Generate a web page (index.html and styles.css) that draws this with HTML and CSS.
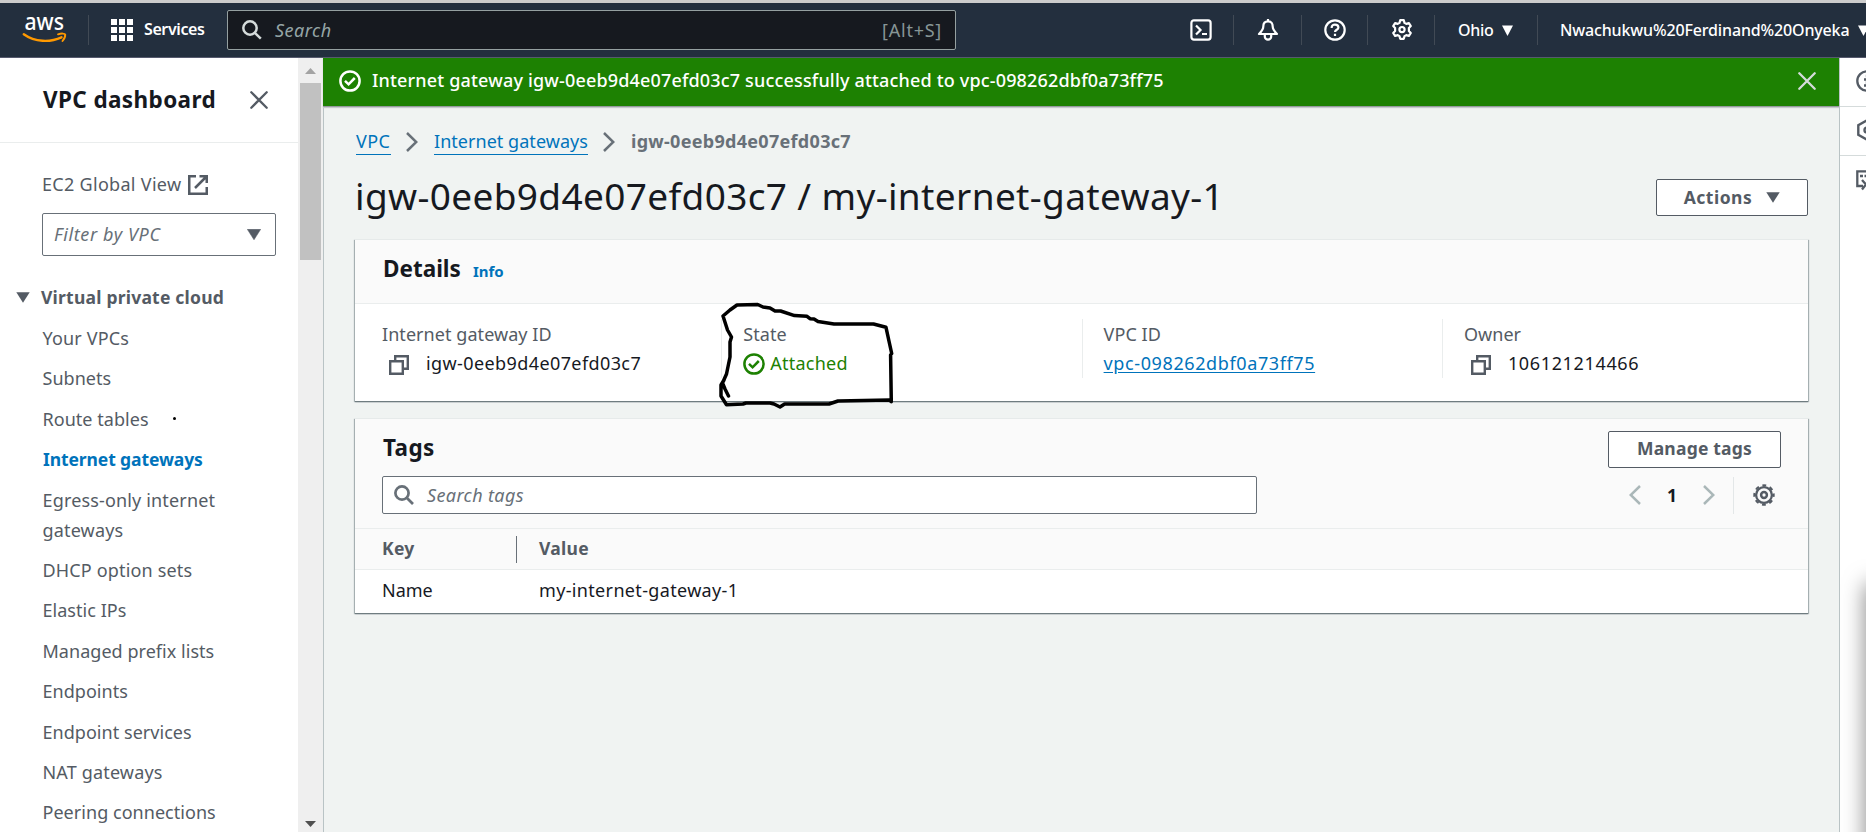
FILE: index.html
```html
<!DOCTYPE html>
<html lang="en">
<head>
<meta charset="utf-8">
<title>Internet gateway | VPC Console</title>
<link rel="stylesheet" href="styles.css">
</head>
<body>
<header class="topnav">
  <a class="logo"><svg width="44" height="28" viewBox="0 0 44 28"><text class="logo-text" x="1.500" y="14" textLength="39.500" lengthAdjust="spacingAndGlyphs">aws</text><path d="M.8 18.200C12 26.300 27 26.600 38.500 21.300" fill="none" stroke="#f90" stroke-width="2.400" stroke-linecap="round"/><path d="M35 18.300C38 17.300 42 17.300 42.200 18.500 42.400 20.500 41.200 23 39.500 25" fill="none" stroke="#f90" stroke-width="1.900" stroke-linecap="round"/></svg></a>
  <i class="rule rule-logo"></i>
  <svg class="grid-icon" width="22" height="22" viewBox="0 0 22 22" fill="#fff"><path d="M0 0h6v6H0zM8 0h6v6H8zM16 0h6v6h-6zM0 8h6v6H0zM8 8h6v6H8zM16 8h6v6h-6zM0 16h6v6H0zM8 16h6v6H8zM16 16h6v6h-6z"/></svg>
  <span class="services">Services</span>
  <div class="global-search">
    <svg width="20" height="20" viewBox="0 0 20 20" fill="none" stroke="#d5dbdb" stroke-width="2.500"><circle cx="8" cy="8" r="6.700"/><path d="M12.800 12.800l6 5.800"/></svg>
    <span class="placeholder">Search</span><span class="shortcut">[Alt+S]</span>
  </div>
  <div class="nav-tools">
    <span class="tool tool-shell"><svg width="22" height="22" viewBox="0 0 22 22" fill="none" stroke="#fff" stroke-width="2.200"><rect x="1.400" y="1.400" width="19.200" height="19.200" rx="2.500"/><path d="M6 6.500l4.500 4.500L6 15.500M12 15h5"/></svg></span>
    <span class="tool tool-bell"><svg width="22" height="22" viewBox="0 0 22 22" fill="none" stroke="#fff" stroke-width="2.200" stroke-linejoin="round"><path d="M11 0v2M11 2.300C7.500 2.300 6.300 4.800 6.300 7.500 6.300 10.500 4.500 12.500 2 15h18c-2.500-2.500-4.300-4.500-4.300-7.500C15.700 4.800 14.500 2.300 11 2.300zM7.800 15.500v2a3.200 3.200 0 0 0 6.400 0v-2"/></svg></span>
    <span class="tool tool-help"><svg width="22" height="22" viewBox="0 0 22 22" fill="none" stroke="#fff" stroke-width="2.200"><circle cx="11" cy="11" r="9.700"/><path d="M7.700 9V8.200C7.700 6.700 9 5.700 11 5.700s3.400 1 3.400 2.700c0 2.300-3.400 2.400-3.400 4.700M11 14.700v2.400"/></svg></span>
    <span class="tool tool-gear"><svg width="22" height="22" viewBox="0 0 22 22" fill="none" stroke="#fff" stroke-width="2.200" stroke-linejoin="round"><path d="M9.200 1.200h3.600l.7 2.700 1.800 1 2.600-.9 1.900 3.100-1.900 2v2.800l1.900 2-1.900 3.100-2.600-.9-1.800 1-.7 2.700H9.200l-.7-2.700-1.800-1-2.600.9-1.900-3.100 1.900-2V9.100l-1.900-2L4.100 4l2.600.9 1.800-1z"/><circle cx="11" cy="10.600" r="2.600"/></svg></span>
    <span class="tool tool-region">Ohio<svg width="11" height="11" viewBox="0 0 11 11"><path d="M0 .5h11L5.500 11z" fill="#fff"/></svg></span>
    <span class="tool tool-user">Nwachukwu%20Ferdinand%20Onyeka<svg width="11" height="11" viewBox="0 0 11 11"><path d="M0 .5h11L5.500 11z" fill="#fff"/></svg></span>
  </div>
</header>

<div class="shell">
  <nav class="sidebar">
    <div class="side-body">
      <div class="side-head"><h2>VPC dashboard</h2><svg width="18" height="18" viewBox="0 0 18 18" stroke="#545b64" stroke-width="2.300" stroke-linecap="round"><path d="M1.300 1.300l15.400 15.400M16.700 1.300L1.300 16.700"/></svg></div>
      <div class="global-view"><span>EC2 Global View</span><svg width="20" height="20" viewBox="0 0 20 20" fill="none" stroke="#545b64" stroke-width="2.500"><path d="M8 1.250H1.250v17.500h17.500V12M11.500 1.250h7.250V8M18.500 1.500L7 13"/></svg></div>
      <div class="filter"><span>Filter by VPC</span><svg width="14" height="11" viewBox="0 0 14 11"><path d="M.3.300h13.400L7 10.800z" fill="#545b64" stroke="#545b64" stroke-width=".5"/></svg></div>
      <div class="group"><svg width="14" height="11" viewBox="0 0 14 11"><path d="M.3.300h13.400L7 10.800z" fill="#545b64"/></svg><span>Virtual private cloud</span></div>
      <ul>
        <li class="loose">Your VPCs</li>
        <li>Subnets</li>
        <li class="dotted">Route tables<i class="dot"></i></li>
        <li class="active">Internet gateways</li>
        <li class="loose">Egress-only internet<br>gateways</li>
        <li class="loose">DHCP option sets</li>
        <li>Elastic IPs</li>
        <li>Managed prefix lists</li>
        <li>Endpoints</li>
        <li>Endpoint services</li>
        <li class="loose">NAT gateways</li>
        <li>Peering connections</li>
      </ul>
    </div>
    <div class="scrollbar">
      <svg width="11" height="6" viewBox="0 0 11 6"><path d="M0 6h11L5.500 0z" fill="#a3a3a3"/></svg>
      <i class="thumb"></i>
      <svg class="down" width="11" height="6" viewBox="0 0 11 6"><path d="M0 0h11L5.500 6z" fill="#505050"/></svg>
    </div>
  </nav>

  <main>
    <div class="flash">
      <svg width="22" height="22" viewBox="0 0 22 22" fill="none" stroke="#fff" stroke-width="2.500"><circle cx="11" cy="11" r="9.600"/><path d="M6 10.800l3.600 3.500 6.200-6.300"/></svg>
      <span>Internet gateway igw-0eeb9d4e07efd03c7 successfully attached to vpc-098262dbf0a73ff75</span>
      <svg class="flash-close" width="18" height="18" viewBox="0 0 18 18" stroke="#d5dbdb" stroke-width="2.300" stroke-linecap="round"><path d="M1.300 1.300l15.400 15.400M16.700 1.300L1.300 16.700"/></svg>
    </div>
    <div class="content">
      <div class="crumbs">
        <a class="c1">VPC</a>
        <svg width="12" height="20" viewBox="0 0 12 20" fill="none" stroke="#687078" stroke-width="2.500"><path d="M1 1l9.300 9L1 19"/></svg>
        <a class="c2">Internet gateways</a>
        <svg width="12" height="20" viewBox="0 0 12 20" fill="none" stroke="#687078" stroke-width="2.500"><path d="M1 1l9.300 9L1 19"/></svg>
        <b>igw-0eeb9d4e07efd03c7</b>
      </div>
      <div class="title-row">
        <h1>igw-0eeb9d4e07efd03c7 / my-internet-gateway-1</h1>
        <button class="btn actions">Actions<svg width="14" height="11" viewBox="0 0 14 11"><path d="M.3.300h13.400L7 10.800z" fill="#545b64"/></svg></button>
      </div>

      <section class="card details">
        <div class="card-head"><h2>Details</h2><a class="info">Info</a></div>
        <div class="cols">
          <div class="col"><div class="label">Internet gateway ID</div>
            <div class="value copyable"><svg width="20" height="20" viewBox="0 0 20 20" fill="none" stroke="#545b64" stroke-width="2.400"><path d="M1.200 6.200h12.600v12.600H1.200zM6.200 6V1.200h12.600v12.600H14"/></svg><span class="id">igw-0eeb9d4e07efd03c7</span></div></div>
          <div class="col"><div class="label">State</div>
            <div class="value state"><svg width="22" height="22" viewBox="0 0 22 22" fill="none" stroke="#1d8102" stroke-width="2.500"><circle cx="11" cy="11" r="9.600"/><path d="M6 10.800l3.600 3.500 6.200-6.300"/></svg><span>Attached</span></div></div>
          <div class="col"><div class="label">VPC ID</div>
            <div class="value"><a class="vpc-link">vpc-098262dbf0a73ff75</a></div></div>
          <div class="col"><div class="label">Owner</div>
            <div class="value copyable"><svg width="20" height="20" viewBox="0 0 20 20" fill="none" stroke="#545b64" stroke-width="2.400"><path d="M1.200 6.200h12.600v12.600H1.200zM6.200 6V1.200h12.600v12.600H14"/></svg><span class="owner">106121214466</span></div></div>
        </div>
        <!-- Freehand highlight around the attachment state -->
        <svg class="ink" width="180" height="110" viewBox="715 300 180 110" fill="none" stroke="#000" stroke-width="3.500" stroke-linejoin="round" stroke-linecap="round"><path d="M728.500 396L725 389 722.500 383 726.500 374 730 357 730 342 731.500 337 727.500 330 723 316 730 310 737 305 757.700 304.500 763 307 770 308 775 311 780.600 311 794.500 315.600 807 316.300 810 318.700 814 319 818 321.500 834 324 873.500 324 886 327.300 889.400 343 891.700 353.500 890.600 355 891.300 401.700 889.500 400 838 401 829 404 784.600 404 780 407 774 404 770 403 746 403 743 404 726.500 404.700 721 396 721 385 724 380"/></svg>
      </section>

      <section class="card tags">
        <div class="tags-head">
          <div class="tags-title"><h2>Tags</h2><button class="btn manage">Manage tags</button></div>
          <div class="tags-tools">
            <div class="tag-search"><svg width="20" height="20" viewBox="0 0 20 20" fill="none" stroke="#687078" stroke-width="2.700"><circle cx="8" cy="8" r="6.600"/><path d="M12.700 12.700l6.300 6.300"/></svg><span>Search tags</span></div>
            <div class="pager">
              <svg width="12" height="20" viewBox="0 0 12 20" fill="none" stroke="#aab7b8" stroke-width="2.500"><path d="M11 1L1.700 10l9.300 9"/></svg>
              <b>1</b>
              <svg width="12" height="20" viewBox="0 0 12 20" fill="none" stroke="#aab7b8" stroke-width="2.500"><path d="M1 1l9.300 9L1 19"/></svg>
              <i></i>
              <svg width="22" height="22" viewBox="0 0 22 22" fill="none" stroke="#545b64"><circle cx="11" cy="11" r="7.900" stroke-width="2.300"/><circle cx="11" cy="11" r="9.700" stroke-width="2" stroke-dasharray="3.900 3.718" stroke-dashoffset="1.950"/><circle cx="11" cy="11" r="2.900" stroke-width="2.500"/></svg>
            </div>
          </div>
        </div>
        <div class="row row-head"><b class="key">Key</b><b class="val">Value</b></div>
        <div class="row row-data"><span class="key">Name</span><span class="val">my-internet-gateway-1</span></div>
      </section>
    </div>
  </main>

  <aside class="tools">
    <div><svg width="22" height="22" viewBox="0 0 22 22" fill="none" stroke="#545b64" stroke-width="2.300"><circle cx="11" cy="11" r="9.700"/><path d="M11 4.800v2.500M8 9.500h3v6M8 15.500h6"/></svg></div>
    <div><svg width="22" height="22" viewBox="0 0 22 22" fill="none" stroke="#545b64" stroke-width="2.400"><path d="M11 1.300l8.700 4.900v9.600L11 20.700l-8.700-4.900V6.200z"/><circle cx="11" cy="11" r="2.500"/></svg></div>
    <div><svg width="22" height="22" viewBox="0 0 22 22" fill="none" stroke="#545b64" stroke-width="2.300"><path d="M7 16H1.300V1.300h19.400V16H13M4 6h3M8.500 6h3M13 6h3M6 10l4 4.500-4 5"/></svg></div>
    <i class="edge-shade"></i>
  </aside>
</div>
</body>
</html>
```
FILE: styles.css
```css
* { box-sizing: border-box; }
body {
  margin: 0;
  width: 1866px;
  height: 832px;
  overflow: hidden;
  font-family: "Noto Sans", "Open Sans", sans-serif;
  font-size: 18px;
  line-height: 30px;
  color: #16191f;
  background: #fff;
}
h1, h2, ul { margin: 0; padding: 0; }
svg { display: block; flex: none; }
span, a, b, h1, h2, li { white-space: nowrap; }

/* Top navigation */
.topnav {
  height: 58px;
  border-top: 3px solid #ccc;
  border-bottom: 1px solid #565a6e;
  background: #232f3e;
  color: #fff;
  display: flex;
  align-items: center;
  padding: 0 0 0 23px;
}
.logo svg { overflow: visible; }
.logo-text { font: 500 23px "Noto Sans", sans-serif; fill: #fff; }
.rule { width: 1px; height: 30px; background: #414a55; margin: 0 22px 0 21px; }
.services { font-size: 16px; font-weight: 600; letter-spacing: -.4px; margin-left: 11px; width: 83px; line-height: 24px; flex: none; padding-bottom: 2px; }
.global-search {
  width: 729px;
  flex: none;
  height: 40px;
  border: 1px solid #95a0a0;
  border-radius: 2px;
  background: #16191f;
  display: flex;
  align-items: center;
  padding: 0 13px 0 14px;
}
.global-search .placeholder { font-style: italic; color: #95a5a6; letter-spacing: .5px; margin-left: 13px; }
.shortcut { margin-left: auto; color: #879596; letter-spacing: .75px; }
.nav-tools { display: flex; align-items: center; margin-left: 234px; flex: none; width: 676px; overflow: hidden; }
.tool { height: 30px; display: flex; align-items: center; border-right: 1px solid #414a55; font-size: 16px; font-weight: 500; flex: none; }
.tool-shell { width: 44px; }
.tool-bell { width: 68px; padding-left: 23px; }
.tool-help { width: 66px; padding-left: 22px; }
.tool-gear { width: 67px; padding-left: 23px; }
.tool-region { width: 103px; padding-left: 23px; letter-spacing: -.3px; gap: 9px; }
.tool-user { border: 0; padding-left: 22px; letter-spacing: -.15px; gap: 9px; }

/* Page frame */
.shell { display: flex; height: 774px; }
.sidebar { width: 324px; flex: none; display: flex; border-right: 1px solid #b9c3c5; background: #fff; }
.side-body { width: 298px; color: #545b64; }
.side-head { height: 85px; border-bottom: 1px solid #eaeded; display: flex; align-items: center; padding: 0 30px 0 43px; justify-content: space-between; }
.side-head svg { margin-bottom: 1px; }
.side-head h2 { font-size: 22.5px; letter-spacing: .38px; color: #16191f; }
.global-view { display: flex; align-items: center; padding: 27px 0 0 42px; height: 57px; letter-spacing: .3px; gap: 7px; }
.global-view span { padding-bottom: 2px; }
.filter {
  margin: 13px 0 0 42px;
  width: 234px;
  height: 43px;
  border: 1px solid #687078;
  border-radius: 2px;
  display: flex;
  align-items: center;
  justify-content: space-between;
  padding: 0 14px 0 11px;
  font-style: italic;
  color: #687078;
  letter-spacing: .62px;
}
.filter span { padding-bottom: 1px; }
.group { display: flex; align-items: center; padding: 26px 0 0 16px; font-weight: 700; font-size: 17.5px; letter-spacing: .22px; gap: 11px; }
.sidebar ul { list-style: none; padding: 6px 0 0 42.500px; }
.sidebar li { padding: 5px 0 5.400px; letter-spacing: .04px; }
.sidebar .loose { letter-spacing: .16px; }
.sidebar .active { font-size: 17.5px; font-weight: 700; color: #0073bb; letter-spacing: -.1px; padding-left: .5px; }
.dotted { display: flex; align-items: center; gap: 24px; }
.dot { width: 3px; height: 3px; background: #000; border-radius: 50%; }
.scrollbar { width: 25px; background: #efefef; display: flex; flex-direction: column; align-items: center; padding: 10px 0 5px; }
.thumb { width: 21px; height: 177px; background: #c1c1c1; margin-top: 9px; }
.scrollbar .down { margin-top: auto; }

main { width: 1516px; flex: none; background: #f0f3f2; border-right: 1px solid #b9c3c5; }
.flash {
  height: 49px;
  margin: 0 0 0 -1px;
  border-bottom: 1px solid #959b9e;
  box-shadow: 0 1px 1px #c6cacc;
  background: #1d8102;
  color: #fff;
  display: flex;
  align-items: center;
  padding: 0 23px 2px 16px;
  font-weight: 500;
  letter-spacing: .17px;
}
.flash span { margin-left: 11px; padding-bottom: 2px; }
.flash-close { margin-left: auto; }
.content { padding: 20px 31px 0; }
.crumbs { display: flex; align-items: center; height: 30px; padding-left: 1px; }
.crumbs a { color: #0073bb; border-bottom: 1px solid #0073bb; line-height: 23px; height: 25px; }
.crumbs .c1 { width: 35px; letter-spacing: .45px; }
.crumbs .c2 { letter-spacing: .04px; }
.crumbs svg { margin: 0 16px 0 15px; }
.crumbs b { color: #687078; letter-spacing: .3px; padding-bottom: 2px; }
.title-row { display: flex; justify-content: space-between; align-items: center; height: 81px; }
h1 { font-size: 37px; line-height: 44px; font-weight: 400; letter-spacing: .36px; padding: 0 0 4px; }
.btn {
  font: 700 17.5px/24px "Noto Sans", sans-serif;
  height: 37px;
  color: #545b64;
  background: #fff;
  border: 1px solid #545b64;
  border-radius: 2px;
  display: flex;
  align-items: center;
  justify-content: center;
  padding: 0 0 2px;
  letter-spacing: .5px;
}
.actions { width: 152px; gap: 14px; }
.actions svg { margin-top: 2px; }
.manage { width: 173px; letter-spacing: .2px; }

/* Cards */
.card {
  position: relative;
  background: #fff;
  border-top: 1px solid #e6eaea;
  box-shadow: 0 1px 1px #6f7c80, 1px 1px 1px #b0babb, -1px 1px 1px #b0babb;
}
.card h2 { font-size: 22.5px; line-height: 30px; padding-left: 1px; }
.details { height: 162px; margin-top: 1px; }
.card-head { height: 64px; background: #fafafa; border-bottom: 1px solid #eaeded; padding: 0 27px 5px; display: flex; align-items: center; gap: 12px; }
.info { color: #0073bb; font-size: 15px; font-weight: 700; padding-top: 4px; }
.cols { display: grid; grid-template-columns: repeat(4, 360.300px); padding: 15px 0 0 6px; }
.col { height: 59px; padding-left: 21px; }
.col + .col { border-left: 1px solid #eaeded; padding-left: 21px; }
.label { color: #545b64; letter-spacing: .06px; line-height: 30px; height: 30px; }
.value { height: 29px; display: flex; align-items: center; line-height: 29px; }
.copyable { padding-left: 7px; gap: 17px; }
.copyable svg { margin-top: 2px; }
.id { letter-spacing: .4px; }
.owner { letter-spacing: .65px; }
.state { color: #1d8102; gap: 5px; letter-spacing: .24px; }
.state svg { margin-top: 1px; }
.vpc-link { color: #0073bb; text-decoration: underline; text-underline-offset: 2px; letter-spacing: .61px; }
.ink { position: absolute; left: 360px; top: 60px; }

.tags { height: 195px; margin-top: 17px; }
.tags-head { height: 110px; background: #fafafa; border-bottom: 1px solid #eaeded; padding: 12px 27px 0; }
.tags-title { display: flex; justify-content: space-between; align-items: center; height: 37px; }
.tags-title h2 { letter-spacing: .4px; padding-bottom: 3px; }
.manage { padding-bottom: 3px; }
.tags-tools { display: flex; justify-content: space-between; margin-top: 8px; height: 38px; align-items: center; }
.tag-search { width: 875px; height: 38px; border: 1px solid #687078; border-radius: 2px; background: #fff; display: flex; align-items: center; padding-left: 11px; gap: 13px; font-style: italic; color: #687078; letter-spacing: .38px; }
.pager { display: flex; align-items: center; margin-right: 6px; }
.pager b { width: 62px; text-align: center; font-size: 17.5px; }
.pager i { width: 1px; height: 37px; background: #e3e7e8; margin: 0 19px 0 18px; }
.row { height: 43px; display: grid; grid-template-columns: 134px 1fr; align-items: center; padding-left: 27px; }
.row-head { height: 41px; background: #fafafa; border-bottom: 1px solid #eaeded; color: #545b64; font-size: 17.5px; letter-spacing: .3px; }
.row-head .key { border-right: 1px solid #687078; line-height: 25px; height: 27px; margin-right: -1px; }
.row-head .val { padding-bottom: 2px; }
.row-data { padding-bottom: 3px; }
.val { padding-left: 23px; }
.row-data .val { letter-spacing: .34px; }

/* Help panel strip, clipped by the window edge */
.tools { position: relative; flex: 1; overflow: hidden; background: #fff; }
.tools div { height: 49px; border-bottom: 1px solid #d5dbdb; padding: 12px 0 0 16px; }
.tools div:nth-child(3) { border: 0; padding-top: 14px; }
.edge-shade { position: absolute; left: 26px; top: 526px; width: 20px; height: 300px; box-shadow: 0 0 22px rgba(0, 0, 0, .5); }
```
